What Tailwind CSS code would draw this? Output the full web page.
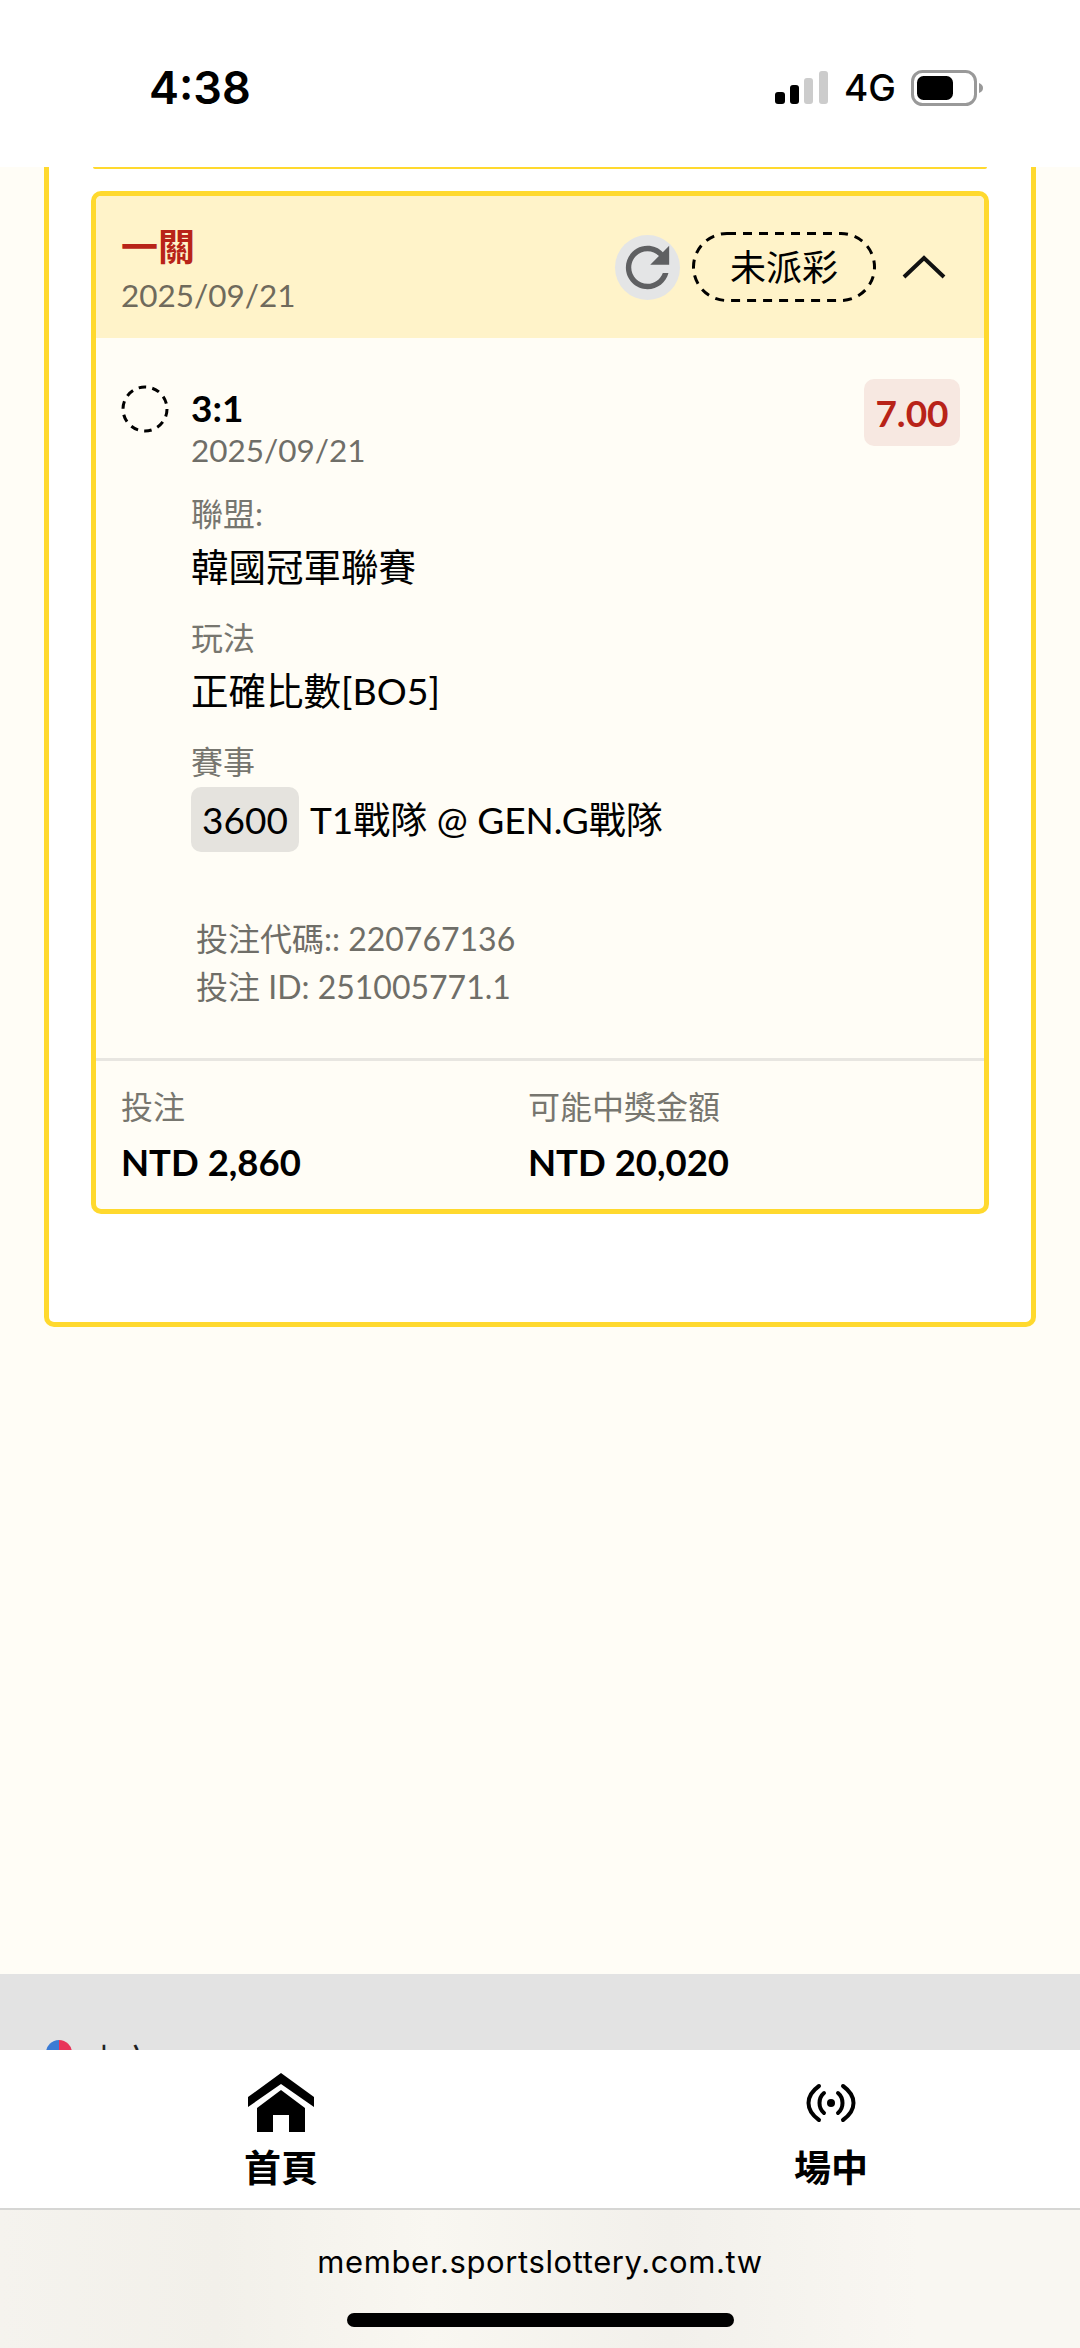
<!DOCTYPE html>
<html>
<head>
<meta charset="utf-8" />
<title>投注紀錄</title>
<script src="https://cdn.jsdelivr.net/npm/@tailwindcss/browser@4"></script>
</head>
<body class="h-[2348px] w-[1080px] overflow-hidden bg-white font-['Lato','Noto_Sans_CJK_TC',sans-serif]">
    <!-- Status bar -->
    <div class="flex h-[167px] items-start justify-between bg-white pl-[149px] pr-[95px] pt-[60px]">
        <span class="font-['Inter',sans-serif] text-[45px] leading-[56px] font-semibold text-black">4:38</span>
        <div class="flex items-center gap-[15px] pt-[10px]">
            <svg width="54" height="34" viewBox="0 0 54 34">
                <rect x="0" y="21" width="10" height="12" rx="3" fill="#000"/>
                <rect x="15" y="14" width="9" height="19" rx="3" fill="#000"/>
                <rect x="29" y="7" width="9" height="26" rx="3" fill="#ccc"/>
                <rect x="44" y="0" width="9" height="33" rx="3" fill="#ccc"/>
            </svg>
            <span class="font-['Inter',sans-serif] text-[37px] leading-[36px] font-medium text-black">4G</span>
            <svg width="74" height="36" viewBox="0 0 74 36">
                <rect x="1.5" y="1.5" width="63" height="33" rx="10" fill="none" stroke="#999" stroke-width="3"/>
                <rect x="6" y="6" width="36" height="24" rx="6.5" fill="#000"/>
                <path d="M68 13 C71 14 72 16 72 18 C72 20 71 22 68 23 Z" fill="#999"/>
            </svg>
        </div>
    </div>

    <main class="h-[1807px] overflow-hidden bg-[#fffdf6] px-[44px]">
        <div class="h-[1160px] rounded-b-[10px] border-x-[5px] border-b-[5px] border-[#ffd92e] bg-white px-[42px]">
            <div class="mx-[2px] h-[2px] rounded-b-[6px] bg-[#ffd92e]"></div>
            <!-- Bet card -->
            <section class="mt-[22px] overflow-hidden rounded-[10px] border-[5px] border-[#ffd92e] bg-[#fffdf6]">
                <header class="flex h-[142px] items-center justify-between bg-[#fff3c9] pl-[25px] pr-[38px]">
                    <div class="pt-[7px]">
                        <div class="text-[37px] leading-[42px] font-bold text-[#b82318]">一關</div>
                        <div class="mt-[7px] text-[31.5px] leading-[40px] text-[#6f6a5c]">2025/09/21</div>
                    </div>
                    <div class="flex items-center">
                        <div class="flex h-[65px] w-[65px] items-center justify-center rounded-full bg-[#e4e5e6]">
                            <svg width="65" height="65" viewBox="0 0 24 24" fill="#5f6062"><path d="M17.65 6.35C16.2 4.9 14.21 4 12 4c-4.42 0-7.99 3.58-7.99 8s3.57 8 7.99 8c3.73 0 6.84-2.55 7.73-6h-2.08c-.82 2.33-3.04 4-5.65 4-3.31 0-6-2.69-6-6s2.69-6 6-6c1.66 0 3.14.69 4.22 1.78L13 11h7V4l-2.35 2.35z"/></svg>
                        </div>
                        <div class="relative ml-[12px] flex h-[70px] w-[184px] items-center justify-center text-[36px] text-black">
                            未派彩
                            <svg class="absolute inset-0" width="184" height="70" viewBox="0 0 184 70" fill="none" stroke="#000" stroke-width="3" stroke-dasharray="9 7"><rect x="1.5" y="1.5" width="181" height="67" rx="33.5"/></svg>
                        </div>
                        <svg class="ml-[26px]" width="44" height="24" viewBox="0 0 44 24" fill="none" stroke="#111" stroke-width="4"><path d="M2 22 L22 3 L42 22"/></svg>
                    </div>
                </header>

                <div class="h-[720px] pl-[25px] pr-[24px] pt-[47px]">
                    <div class="flex items-start">
                        <svg class="shrink-0" width="48" height="48" viewBox="0 0 48 48" fill="none" stroke="#000" stroke-width="3" stroke-dasharray="7.6 6.2"><circle cx="24" cy="24" r="22"/></svg>
                        <div class="ml-[22px] flex-1">
                            <div class="text-[37px] leading-[46px] font-bold text-black">3:1</div>
                            <div class="text-[31.5px] leading-[38px] text-[#6f6e68]">2025/09/21</div>
                        </div>
                        <div class="-mt-[6px] flex h-[67px] w-[96px] items-center justify-center rounded-[10px] bg-[#f7e8e1] text-[37px] font-bold text-[#b82318]">7.00</div>
                    </div>

                    <dl class="ml-[70px]">
                        <dt class="mt-[23px] text-[32px] leading-[44px] text-[#77766f]">聯盟:</dt>
                        <dd class="mt-[6px] text-[37.5px] leading-[50px] text-black">韓國冠軍聯賽</dd>
                        <dt class="mt-[24px] text-[32px] leading-[44px] text-[#77766f]">玩法</dt>
                        <dd class="mt-[6px] text-[37.5px] leading-[50px] text-black">正確比數[BO5]</dd>
                        <dt class="mt-[24px] text-[32px] leading-[44px] text-[#77766f]">賽事</dt>
                        <dd class="mt-[3px] flex items-center text-[37px] text-black">
                            <span class="flex h-[65px] w-[108px] items-center justify-center rounded-[10px] bg-[#e5e3de]">3600</span>
                            <span class="ml-[11px]">T1戰隊 @ GEN.G戰隊</span>
                        </dd>
                    </dl>

                    <div class="ml-[75px] mt-[63px] text-[32px] leading-[48px] text-[#6f6e68]">
                        <div>投注代碼:: 220767136</div>
                        <div>投注 ID: 251005771.1</div>
                    </div>
                </div>

                <footer class="flex h-[151px] border-t-[3px] border-[#e8e6e1] pl-[25px] pt-[24px]">
                    <div class="w-[407px]">
                        <div class="text-[32px] leading-[44px] text-[#77766f]">投注</div>
                        <div class="mt-[10px] text-[36.5px] leading-[46px] font-bold text-black">NTD 2,860</div>
                    </div>
                    <div>
                        <div class="text-[32px] leading-[44px] text-[#77766f]">可能中獎金額</div>
                        <div class="mt-[10px] text-[36.5px] leading-[46px] font-bold text-black">NTD 20,020</div>
                    </div>
                </footer>
            </section>
        </div>
    </main>

    <!-- Footer strip, cut off by the tab bar -->
    <div class="flex h-[76px] items-start overflow-hidden bg-[#e3e3e3] pl-[46px] pt-[66px]">
        <div class="h-[26px] w-[26px] rounded-full bg-[linear-gradient(90deg,#3a7bd5_50%,#e8345a_50%)]"></div>
        <span class="ml-[16px] text-[32px] leading-[40px] text-[#222]">中文</span>
    </div>

    <!-- Tab bar -->
    <nav class="flex h-[158px] gap-[450px] bg-white pl-[231px] pt-[23px]">
        <a href="#" class="flex w-[100px] flex-col items-center text-black">
            <svg width="66" height="59" viewBox="0 0 66 59" fill="#000">
                <path d="M33 0 L66 24 V34 L33 11 L0 34 V24 Z"/>
                <path fill-rule="evenodd" d="M33 17 L57 35 V59 H9 V35 Z M25 42 V59 H41 V42 Z"/>
            </svg>
            <span class="mt-[14px] text-[37px] leading-[44px] font-bold">首頁</span>
        </a>
        <a href="#" class="flex w-[100px] flex-col items-center text-black">
            <svg class="mb-[9px] mt-[10px]" width="50" height="40" viewBox="0 0 50 40" fill="none" stroke="#000" stroke-width="4" stroke-linecap="round">
                <circle cx="25" cy="20" r="4" fill="#000" stroke="none"/>
                <path d="M18 10 C12 15 12 25 18 30"/>
                <path d="M32 10 C38 15 38 25 32 30"/>
                <path d="M13 3 C-1 13 -1 27 13 37"/>
                <path d="M37 3 C51 13 51 27 37 37"/>
            </svg>
            <span class="mt-[14px] text-[37px] leading-[44px] font-bold">場中</span>
        </a>
    </nav>

    <!-- Browser address bar -->
    <div class="relative h-[140px] border-t-[2px] border-[#d6d6d4] bg-[linear-gradient(90deg,#f5f3ee_0%,#f2f0ea_20%,#f9f7f1_40%,#f2f0eb_62%,#f9f7f2_85%,#f9f7f2_100%)]">
        <div class="pt-[32px] text-center font-['Inter',sans-serif] text-[31px] leading-[40px] tracking-[0.6px] text-black">member.sportslottery.com.tw</div>
        <div class="absolute left-[347px] top-[103px] h-[14px] w-[387px] rounded-full bg-black"></div>
    </div>
</body>
</html>
